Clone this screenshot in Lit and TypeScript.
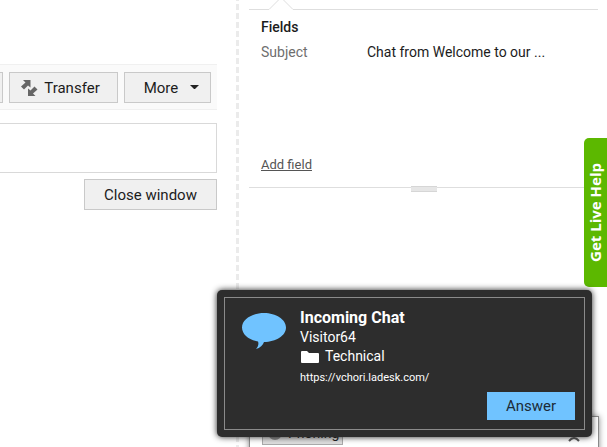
import { LitElement, html, css } from "lit";
import { customElement } from "lit/decorators.js";

@customElement("app-root")
export class AppRoot extends LitElement {
  static styles = css`
    :host {
      display: block;
      position: relative;
      min-height: 100vh;
      overflow: hidden;
      background: #fff;
      color: #1c1c1c;
      font: 14px/20px Roboto, "Liberation Sans", sans-serif;
    }
    * { box-sizing: border-box; }
    button { font: inherit; color: inherit; margin: 0; padding: 0; cursor: pointer; }
    .page {
      display: grid;
      grid-template-columns: 217px 3px 1fr;
      column-gap: 19px;
      min-height: 100vh;
    }
    .chat { display: flex; flex-direction: column; padding-top: 64px; }
    .toolbar {
      display: flex;
      justify-content: flex-end;
      gap: 6px;
      height: 46px;
      padding: 7px 6px;
      background: #fafafa;
      border: solid #f0f0f0;
      border-width: 1px 0;
    }
    .btn {
      display: flex;
      flex: none;
      align-items: center;
      justify-content: center;
      height: 31px;
      background: #f0f0f0;
      border: 1px solid #c9c9c9;
      font-size: 15px;
    }
    .transfer { width: 109px; gap: 6px; padding-right: 6px; }
    .more { width: 87px; gap: 12px; padding-left: 8px; }
    .previous { width: 60px; }
    .message {
      height: 50px;
      margin: 13px 0 6px;
      width: 100%;
      border: 1px solid #d9d9d9;
      border-left: 0;
      background: #fff;
      resize: none;
      outline: none;
      display: block;
    }
    .close { align-self: flex-end; width: 133px; }
    .divider {
      background: repeating-linear-gradient(#ebebeb 0 1px, #fff 1px 4px, #ebebeb 4px 9px);
    }
    .details { margin-left: -9px; margin-right: 9px; }
    .tabline { display: flex; height: 10px; }
    .tabline::before, .tabline::after { content: ""; border-bottom: 1px solid #dedede; }
    .tabline::before { width: 20px; }
    .tabline::after { flex: 1; }
    .tabline svg { display: block; }
    .fields { padding: 7px 12px 0; height: 177px; display: flex; flex-direction: column; }
    h2 { margin: 0; font-size: 14px; line-height: 20px; font-weight: 500; }
    dl { display: grid; grid-template-columns: 106px 1fr; margin: 5px 0 0; }
    dt { color: #6e6e6e; }
    dd { margin: 0; }
    .add { margin-top: auto; margin-bottom: 12px; align-self: flex-start; color: #555; font-size: 13px; }
    .split { display: flex; justify-content: center; border-top: 1px solid #dedede; height: 6px; }
    .grip {
      width: 26px;
      height: 6px;
      margin-top: -2px;
      background: #e6e6e6;
      border: solid #d6d6d6;
      border-width: 1px 0;
    }
    .help {
      position: absolute;
      right: 0;
      top: 138px;
      width: 23px;
      height: 149px;
      border: 0;
      border-radius: 5px 0 0 5px;
      background: #5cb800;
      color: #fff;
      font: 700 15px/23px "Open Sans", sans-serif;
      display: flex;
      align-items: center;
      justify-content: center;
    }
    .help span { writing-mode: vertical-rl; transform: rotate(180deg); white-space: nowrap; }
    .under {
      position: absolute;
      left: 249px;
      right: 8px;
      top: 416px;
      height: 60px;
      padding: 0 12px;
      display: flex;
      justify-content: space-between;
      align-items: flex-start;
      background: #fff;
      border: 1px solid #8a8a8a;
      box-shadow: 0 0 6px #888;
    }
    .phoning {
      display: flex;
      align-items: flex-end;
      gap: 6px;
      width: 81px;
      height: 28px;
      padding: 0 0 1px 5px;
      background: #dedede;
      border: 1px solid #aaa;
    }
    .collapse { border: 0; background: none; padding: 19px 6px 0; }
    .collapse svg, .phoning svg { display: block; }
    .phoning svg { margin-bottom: 3px; }
    .toast {
      position: absolute;
      left: 217px;
      right: 15px;
      top: 290px;
      padding: 7px;
      background: #2d2d2d;
      border-radius: 5px;
      box-shadow: 0 0 6px #222;
      color: #fff;
    }
    .inner {
      display: grid;
      grid-template-columns: 44px 1fr auto;
      column-gap: 14px;
      height: 133px;
      padding: 9px 9px 9px 17px;
      border: 1px solid #8a8a8a;
    }
    .inner > svg { margin-top: 6px; }
    .title { font-size: 16px; line-height: 21px; font-weight: 700; }
    .line { display: flex; align-items: center; gap: 6px; line-height: 19px; }
    .url { font-size: 11px; line-height: 24px; }
    .answer {
      align-self: end;
      width: 88px;
      height: 28px;
      border: 0;
      background: #70c3ff;
      color: #1c2b38;
      font-size: 15px;
    }
  `;

  render() {
    return html`
      <div class="page">
        <main class="chat">
          <div class="toolbar">
            <button class="btn previous" aria-label="Previous action"></button>
            <button class="btn transfer">
              <svg width="17" height="16" viewBox="0 0 17 16" fill="#666" aria-hidden="true">
                <path d="M2 0H9.500V7.500L7 5.500L3 9.500L0 6.500L4.500 2.500Z" />
                <path d="M7 16V8.500L9.500 10.500L13.500 6.500L16.500 9.500L12 13.500L14.500 16Z" />
              </svg>
              Transfer
            </button>
            <button class="btn more">
              More
              <svg width="9" height="5" viewBox="0 0 9 5" fill="#222" aria-hidden="true"><path d="M0 0H9L5 4H4Z" /></svg>
            </button>
          </div>
          <textarea class="message" aria-label="Message"></textarea>
          <button class="btn close">Close window</button>
        </main>
        <div class="divider"></div>
        <aside class="details">
          <div class="tabline">
            <svg width="24" height="10" viewBox="0 0 24 10" fill="none" stroke="#dedede" aria-hidden="true">
              <path d="M0 9.500L10 -0.500H14L24 9.500" />
            </svg>
          </div>
          <section class="fields">
            <h2>Fields</h2>
            <dl>
              <dt>Subject</dt>
              <dd>Chat from Welcome to our ...</dd>
            </dl>
            <a class="add" href="#">Add field</a>
          </section>
          <div class="split"><div class="grip"></div></div>
        </aside>
      </div>
      <button class="help"><span>Get Live Help</span></button>
      <div class="under">
        <button class="phoning">
          <svg width="14" height="14" viewBox="0 0 14 14" aria-hidden="true"><circle cx="7" cy="7" r="7" fill="#888" /></svg>
          Phoning
        </button>
        <button class="collapse" aria-label="Collapse">
          <svg width="12" height="6" viewBox="0 0 12 6" fill="none" stroke="#555" stroke-width="2"><path d="M1 5Q6 -1 11 5" /></svg>
        </button>
      </div>
      <section class="toast" role="alertdialog" aria-label="Incoming Chat">
        <div class="inner">
          <svg width="44" height="37" viewBox="0 0 44 37" fill="#70c3ff" aria-hidden="true">
            <path d="M22 0C34 0 44 6.500 44 14.500S34 29 22 29C21 32 18 35 14 36C16 34 17 31 16 28.500C7 27 0 21.500 0 14.500C0 6.500 10 0 22 0Z" />
          </svg>
          <div>
            <div class="title">Incoming Chat</div>
            <div class="line">Visitor64</div>
            <div class="line">
              <svg width="19" height="12" viewBox="0 0 19 12" fill="#fff" aria-hidden="true">
                <path d="M1 1Q1 0 2 0H7L9 2H18Q19 2 19 3V11Q19 12 18 12H2Q1 12 1 11Z" />
              </svg>
              Technical
            </div>
            <div class="url">https://vchori.ladesk.com/</div>
          </div>
          <button class="answer">Answer</button>
        </div>
      </section>
    `;
  }
}
